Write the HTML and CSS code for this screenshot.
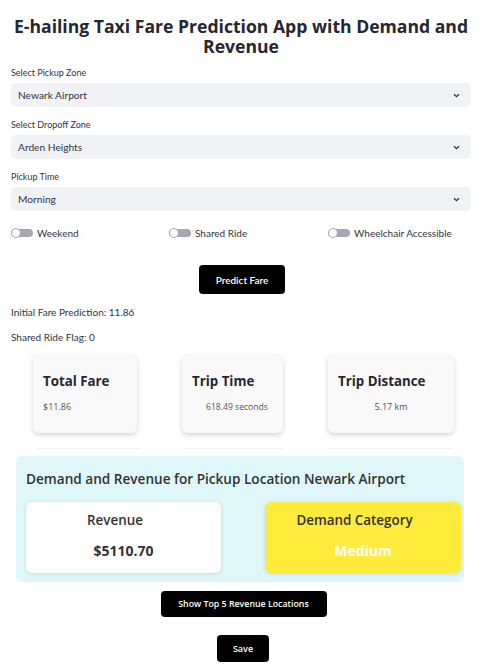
FILE: index.html
```html
<!DOCTYPE html>
<html>
<head>
<meta charset="utf-8">
<link rel="stylesheet" href="styles.css">
</head>
<body>
<div class="app">
  <h1 class="title">E-hailing Taxi Fare Prediction App with Demand and Revenue</h1>

  <div class="field">
    <div class="label">Select Pickup Zone</div>
    <div class="select"><span>Newark Airport</span><svg class="chev" width="7" height="5" viewBox="0 0 7 5"><path d="M1 1.2 L3.5 3.7 L6 1.2" fill="none" stroke="#31333f" stroke-width="1.3"/></svg></div>
  </div>
  <div class="field">
    <div class="label">Select Dropoff Zone</div>
    <div class="select"><span>Arden Heights</span><svg class="chev" width="7" height="5" viewBox="0 0 7 5"><path d="M1 1.2 L3.5 3.7 L6 1.2" fill="none" stroke="#31333f" stroke-width="1.3"/></svg></div>
  </div>
  <div class="field">
    <div class="label">Pickup Time</div>
    <div class="select"><span>Morning</span><svg class="chev" width="7" height="5" viewBox="0 0 7 5"><path d="M1 1.2 L3.5 3.7 L6 1.2" fill="none" stroke="#31333f" stroke-width="1.3"/></svg></div>
  </div>

  <div class="toggles">
    <div class="toggle"><span class="track"><span class="knob"></span></span>Weekend</div>
    <div class="toggle"><span class="track"><span class="knob"></span></span>Shared Ride</div>
    <div class="toggle"><span class="track"><span class="knob"></span></span>Wheelchair Accessible</div>
  </div>

  <div class="center"><button class="btn btn-predict">Predict Fare</button></div>

  <p class="info">Initial Fare Prediction: 11.86</p>
  <p class="info">Shared Ride Flag: 0</p>

  <div class="cards">
    <div class="col">
      <div class="card c1"><div class="card-title">Total Fare</div><div class="card-val v1">$11.86</div></div>
      <div class="line l1"></div>
    </div>
    <div class="col">
      <div class="card c2"><div class="card-title">Trip Time</div><div class="card-val v2">618.49 seconds</div></div>
      <div class="line l2"></div>
    </div>
    <div class="col">
      <div class="card c3"><div class="card-title">Trip Distance</div><div class="card-val v3">5.17 km</div></div>
      <div class="line l3"></div>
    </div>
  </div>

  <div class="demand">
    <div class="demand-h">Demand and Revenue for Pickup Location Newark Airport</div>
    <div class="demand-grid">
      <div class="dcard rev"><div class="dlabel">Revenue</div><div class="dval">$5110.70</div></div>
      <div class="dcard cat"><div class="dlabel">Demand Category</div><div class="dval white">Medium</div></div>
    </div>
  </div>

  <div class="center"><button class="btn btn-top">Show Top 5 Revenue Locations</button></div>
  <div class="center"><button class="btn btn-save">Save</button></div>
</div>
</body>
</html>
```

FILE: styles.css
```css
* { box-sizing: border-box; }
html, body { margin: 0; padding: 0; background: #fff; }
body { font-family: "Lato", "Open Sans", sans-serif; color: #31333f; }

.app { width: 482px; padding: 16px 11px 0 11px; }

.title {
  margin: 0 -6px;
  text-align: center;
  font-size: 17.6px;
  line-height: 20px;
  font-weight: 700;
  color: #262730;
  font-family: "Open Sans", sans-serif;
}

.field { margin-top: 11px; }
.field + .field { margin-top: 12px; }
.label { font-size: 9px; line-height: 12px; margin-bottom: 4px; color: #31333f; }
.select {
  height: 24px;
  background: #f0f2f6;
  border-radius: 5px;
  display: flex;
  align-items: center;
  justify-content: space-between;
  padding: 0 11px 0 7px;
  font-size: 10.2px;
}

.toggles {
  margin-top: 15px;
  display: grid;
  grid-template-columns: 158px 159px 1fr;
  height: 14px;
}
.toggle { display: flex; align-items: center; font-size: 10px; line-height: 14px; }
.track {
  width: 22px; height: 8px; border-radius: 4px; background: #a3a8b4;
  position: relative; margin-right: 4px; display: inline-block;
}
.knob {
  position: absolute; left: 0; top: -1px; width: 10px; height: 10px; border-radius: 50%;
  background: #fff; border: 1px solid #a3a8b4;
}

.center { display: flex; justify-content: center; }
.btn {
  background: #000; color: #fff; border: none; border-radius: 4px;
  font-family: "Lato", sans-serif; font-weight: 600; font-size: 10px; padding: 0;
}
.btn-predict { margin-top: 25px; width: 86px; height: 29px; margin-left: 2px; }
.btn-top { margin-top: 9px; width: 166px; height: 26px; font-family: "Open Sans", sans-serif; font-size: 8.8px; margin-left: 5px; }
.btn-save { margin-top: 18px; width: 52px; height: 27px; font-family: "Open Sans", sans-serif; font-size: 9px; margin-left: 4px; }

.info { margin: 11px 0 0 0; font-size: 10px; line-height: 14px; }

.cards {
  margin-top: 11px;
  display: grid;
  grid-template-columns: 148px 149px 1fr;
  column-gap: 10px;
}
.card {
  height: 78px;
  background: #f9f9f9;
  border-radius: 6px;
  box-shadow: 0 2px 5px rgba(0, 0, 0, 0.18);
  padding: 17px 10px 0 10px;
  font-family: "Open Sans", sans-serif;
}
.c1 { width: 104px; margin-left: 22px; }
.c2 { width: 101px; margin-left: 13px; }
.c3 { width: 126px; margin-left: 0; }
.card-title { font-size: 13.3px; line-height: 18px; font-weight: 700; color: #262730; }
.card-val { margin-top: 11px; font-size: 9px; line-height: 12px; color: #555; }
.v2 { padding-left: 14px; font-size: 8.6px; }
.v3 { text-align: center; }
.line { height: 1px; background: #f1f1f1; margin-top: 15px; }
.l1 { width: 103px; margin-left: 26px; }
.l2 { width: 100px; margin-left: 14px; }
.l3 { width: 125px; margin-left: 0; }

.demand {
  margin: 7px 7px 0 5px;
  background: #e0f7fa;
  border-radius: 6px;
  padding: 14px 9px 9px 10px;
  font-family: "Open Sans", sans-serif;
}
.demand-h { font-size: 13.6px; line-height: 18px; font-weight: 600; color: #333; }
.demand-grid {
  margin-top: 14px;
  display: grid;
  grid-template-columns: 195px 196px;
  column-gap: 44px;
}
.dcard {
  height: 71px;
  border-radius: 6px;
  box-shadow: 0 1px 4px rgba(0, 0, 0, 0.12);
  padding-top: 10px;
  text-align: center;
}
.rev { background: #fff; }
.cat { background: #ffeb3b; }
.dlabel { font-size: 13.4px; line-height: 16px; font-weight: 600; color: #333; padding-right: 17px; }
.dval { margin-top: 15px; font-size: 14px; line-height: 16px; font-weight: 700; color: #333; }
.dval.white { color: #fff; }
```
